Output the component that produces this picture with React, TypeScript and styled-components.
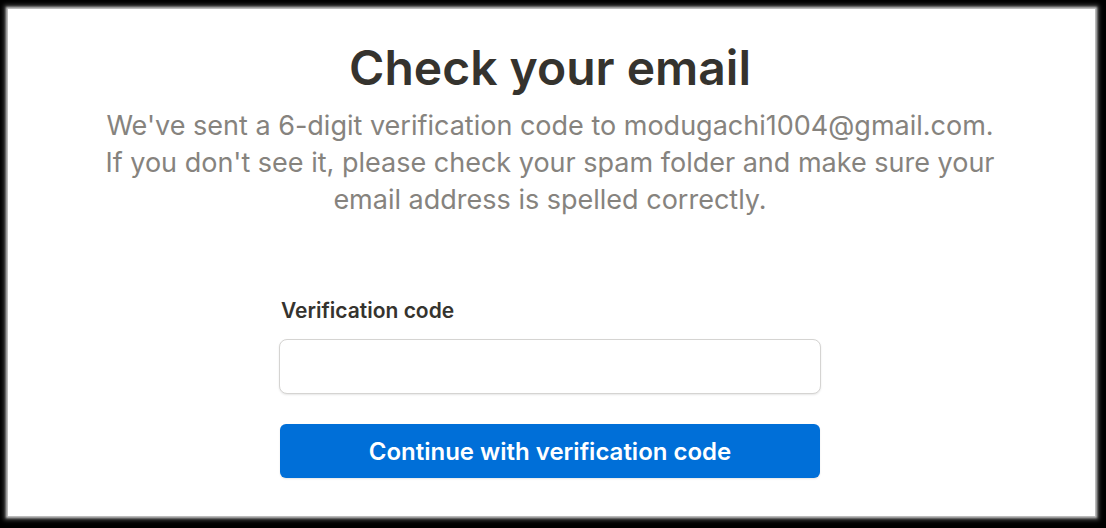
import React from "react";
import styled, { createGlobalStyle } from "styled-components";

const GlobalStyle = createGlobalStyle`
  html, body { margin: 0; padding: 0; height: 100%; background: #000; }
  #root { height: 100%; }
  * { box-sizing: border-box; }
`;

const Frame = styled.div`
  height: 528px;
  width: 1106px;
  padding: 9px 11px 12px 8px;
  background: #000;
`;

const Card = styled.main`
  height: 100%;
  background: #fff;
  box-shadow: 0 0 2px 2px rgba(210, 210, 210, 0.9), 0 0 4px 4px rgba(120, 120, 120, 0.6);
  display: flex;
  flex-direction: column;
  align-items: center;
  padding: 30px 3px 0 0;
  font-family: Inter, "Noto Sans", sans-serif;
`;

const Title = styled.h1`
  margin: 0;
  font-size: 48px;
  line-height: 58px;
  font-weight: 600;
  color: #35332e;
`;

const Lead = styled.p`
  margin: 10px 0 0;
  font-size: 27px;
  line-height: 37px;
  font-weight: 400;
  color: #86837e;
  text-align: center;
`;

const Form = styled.form`
  margin-top: 80px;
  width: 542px;
  display: flex;
  flex-direction: column;
`;

const Label = styled.label`
  font-size: 21px;
  line-height: 26px;
  font-weight: 600;
  color: #35332e;
  padding-left: 2px;
`;

const Input = styled.input`
  margin-top: 15px;
  height: 55px;
  width: 100%;
  border: 1px solid #d5d4d2;
  border-radius: 8px;
  background: #fff;
  box-shadow: 0 1px 2px rgba(15, 15, 15, 0.1);
  font: inherit;
  font-size: 20px;
  padding: 0 14px;
  outline: none;
`;

const Button = styled.button`
  margin-top: 30px;
  margin-left: 1px;
  width: 540px;
  height: 54px;
  border: none;
  border-radius: 6px;
  background: #006fd8;
  color: #fff;
  font-family: inherit;
  font-size: 24px;
  font-weight: 600;
  box-shadow: 0 1px 2px rgba(15, 15, 15, 0.1);
  cursor: pointer;
`;

export default function App() {
  return (
    <Frame>
      <GlobalStyle />
      <Card>
        <Title>Check your email</Title>
        <Lead>
          We've sent a 6-digit verification code to modugachi1004@gmail.com.
          <br />
          If you don't see it, please check your spam folder and make sure your
          <br />
          email address is spelled correctly.
        </Lead>
        <Form onSubmit={(e) => e.preventDefault()}>
          <Label htmlFor="code">Verification code</Label>
          <Input id="code" type="text" />
          <Button type="submit">Continue with verification code</Button>
        </Form>
      </Card>
    </Frame>
  );
}
